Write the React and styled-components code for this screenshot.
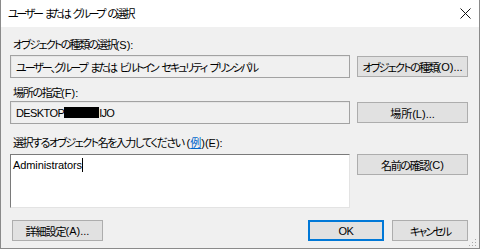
import React from "react";
import styled, { createGlobalStyle } from "styled-components";

const Global = createGlobalStyle`
  html, body { margin: 0; padding: 0; background: #ffffff; }
  body {
    font-family: "Liberation Sans", "Noto Sans CJK JP", sans-serif;
    font-size: 11px;
    color: #000;
  }
  * { box-sizing: border-box; }
`;

const Window = styled.div`
  position: relative;
  width: 480px;
  height: 249px;
  display: flex;
  flex-direction: column;
  background: #f0f0f0;
  border-left: 1px solid #8a8a8a;
  border-right: 1px solid #8a8a8a;
  border-bottom: 1px solid #8a8a8a;
  font-feature-settings: "palt";
`;

const TitleBar = styled.div`
  height: 27px;
  flex: none;
  background: #ffffff;
  display: flex;
  align-items: center;
  justify-content: space-between;
  padding-left: 7px;
  padding-right: 8px;
`;

const T = styled.span`
  letter-spacing: ${(p) => p.$ls || 0}px;
  word-spacing: ${(p) => p.$ws || 0}px;
  white-space: pre;
`;

const Title = styled(T)`
  line-height: 16px;
`;

const Body = styled.div`
  flex: 1;
  display: flex;
  flex-direction: column;
  padding: 10px 11px 0 9px;
`;

const Label = styled.div`
  height: 16px;
  line-height: 16px;
  padding-left: 3px;
  margin-top: ${(p) => p.$mt || 0}px;
  margin-bottom: ${(p) => p.$mb || 0}px;
  white-space: pre;
`;

const Row = styled.div`
  display: grid;
  grid-template-columns: 340px 111px;
  column-gap: 7px;
  align-items: ${(p) => p.$align || "center"};
`;

const ReadField = styled.div`
  height: 23px;
  border: 1px solid #a2a2a2;
  box-shadow: inset 1px 1px 0 #e6e6e6;
  background: #f0f0f0;
  padding-left: 5px;
  display: flex;
  align-items: center;
  white-space: nowrap;
`;

const Redact = styled.span`
  display: inline-block;
  width: 35px;
  height: 11px;
  background: #000;
  margin-left: -3px;
`;

const TextBox = styled.div`
  height: 54px;
  background: #ffffff;
  border-style: solid;
  border-width: 1px;
  border-color: #7a7a7a #e3e3e3 #e3e3e3 #7a7a7a;
  padding: 2px 2px;
  line-height: 16px;
`;

const Caret = styled.span`
  display: inline-block;
  width: 1px;
  height: 14px;
  background: #000;
  vertical-align: -3px;
`;

const Button = styled.div`
  height: 21px;
  width: ${(p) => (p.$w ? `${p.$w}px` : "auto")};
  background: #e1e1e1;
  border: 1px solid ${(p) => (p.$default ? "#0078d7" : "#adadad")};
  box-shadow: ${(p) => (p.$default ? "inset 0 0 0 1px #0078d7" : "none")};
  display: flex;
  align-items: center;
  justify-content: center;
  white-space: pre;
`;

const Footer = styled.div`
  margin-top: 12px;
  display: flex;
  align-items: center;
  padding-left: 2px;
`;

const Spacer = styled.div`
  flex: 1;
`;

const FooterRight = styled.div`
  display: flex;
  gap: 8px;
`;

const Link = styled.span`
  color: #0066cc;
  text-decoration: underline;
`;

const Grip = styled.svg`
  position: absolute;
  right: 2px;
  bottom: 1px;
`;

export default function App() {
  return (
    <>
      <Global />
      <Window>
        <TitleBar>
          <Title $ls={-2.3} $ws={2.5}>ユーザー または グループ の選択</Title>
          <svg width="11" height="11" viewBox="0 0 11 11">
            <path d="M0.5 0.5 L10.5 10.5 M10.5 0.5 L0.5 10.5" stroke="#111" strokeWidth="1" fill="none" />
          </svg>
        </TitleBar>
        <Body>
          <Label $mb={2}>
            <T $ls={-1.7}>オブジェクトの種類の選択</T>(S):
          </Label>
          <Row>
            <ReadField>
              <T $ls={-2} $ws={2.5}>ユーザー、グループ または ビルトイン セキュリティ プリンシパル</T>
            </ReadField>
            <Button>
              <T $ls={-1.7}>オブジェクトの種類</T>(O)...
            </Button>
          </Row>
          <Label $mt={7}>
            <T $ls={-1.3}>場所の指定</T>(F):
          </Label>
          <Row>
            <ReadField>
              <T $ls={-0.6}>DESKTOP-</T>
              <Redact />
              <T $ls={-0.8}>IJO</T>
            </ReadField>
            <Button>場所(L)...</Button>
          </Row>
          <Label $mt={11} $mb={3}>
            <T $ls={-1.5}>選択するオブジェクト名を入力してください</T>
            {" ("}
            <Link>例</Link>
            {")(E):"}
          </Label>
          <Row $align="start">
            <TextBox>
              <T $ls={-0.1}>Administrators</T>
              <Caret />
            </TextBox>
            <Button>
              <T $ls={-1.4}>名前の確認</T>(C)
            </Button>
          </Row>
          <Footer>
            <Button $w={91}>
              <T $ls={-1}>詳細設定</T>(A)...
            </Button>
            <Spacer />
            <FooterRight>
              <Button $w={76} $default>
                <T $ls={-0.5}>OK</T>
              </Button>
              <Button $w={76}>
                <T $ls={-1.9}>キャンセル</T>
              </Button>
            </FooterRight>
          </Footer>
        </Body>
        <Grip width="8" height="8" viewBox="0 0 8 8">
          <g fill="#a8a8a8">
            <rect x="6" y="0" width="1" height="1" />
            <rect x="3" y="3" width="1" height="1" />
            <rect x="6" y="3" width="1" height="1" />
            <rect x="0" y="6" width="1" height="1" />
            <rect x="3" y="6" width="1" height="1" />
            <rect x="6" y="6" width="1" height="1" />
          </g>
        </Grip>
      </Window>
    </>
  );
}
